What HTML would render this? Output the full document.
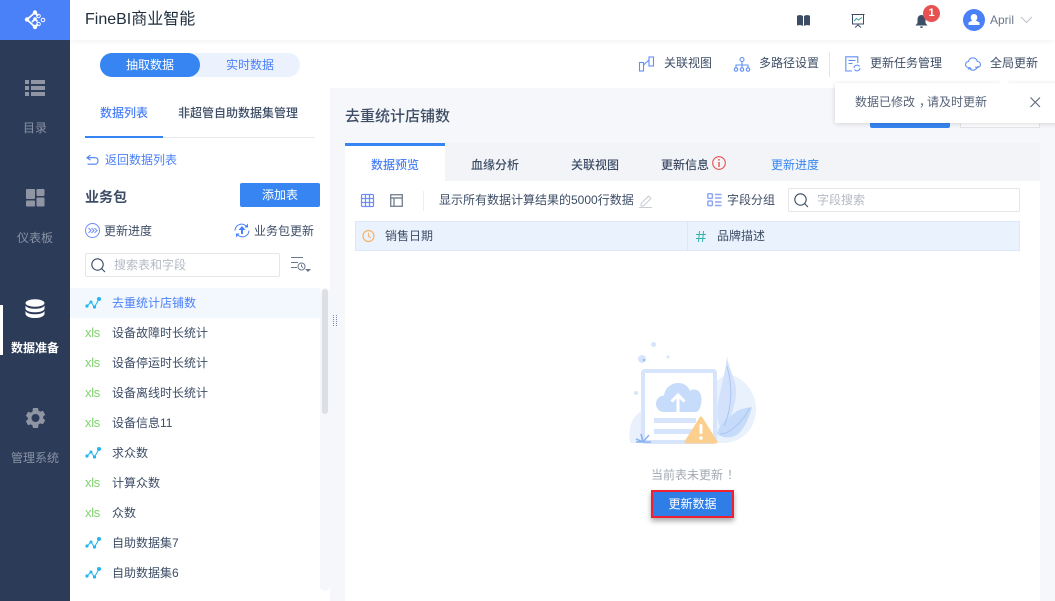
<!DOCTYPE html>
<html lang="zh"><head><meta charset="utf-8"><title>FineBI</title>
<style>
html,body{margin:0;padding:0;width:1055px;height:601px;overflow:hidden;background:#fff}
body{font-family:"Liberation Sans","Noto Sans CJK SC",sans-serif;font-size:12px;color:#3d4d66;position:relative}
.a,.t{position:absolute}
.t{white-space:nowrap;line-height:18px;height:18px}
svg{position:absolute;overflow:visible}
.c{text-align:center}
.m{font-weight:500}
.x{color:#7fd36f;letter-spacing:-.3px;font-size:13px;left:85px}
.ln path{fill:none;stroke:#23b5ee;stroke-width:1}.ln circle{fill:#23b5ee}
</style></head><body>
<!-- backgrounds -->
<div class="a" style="left:70px;top:0;width:985px;height:40px;background:#fff;box-shadow:0 1px 6px rgba(0,0,0,.06)"></div>
<div class="a" style="left:330px;top:88px;width:725px;height:513px;background:#f6f7fa"></div>
<div class="a" style="left:0;top:0;width:70px;height:601px;background:#2c3b58"></div>
<div class="a" style="left:0;top:0;width:70px;height:40px;background:#4a80f8"></div>

<!-- logo -->
<svg style="left:24px;top:10px" width="22" height="20" viewBox="0 0 22 20"><g fill="none" stroke="#fff" stroke-width="1"><circle cx="14.500" cy="6" r="1.800"/><circle cx="19" cy="10" r="1.800"/><circle cx="14.500" cy="14" r="1.800"/></g><path fill="none" stroke="#fff" stroke-width="1.800" d="M11 2.500L3 9.500l8 7.500M11 2.500l3 3.500M11 17l3-3M8 12l3-3 2.500 2.500"/><g fill="#fff"><circle cx="11" cy="2.500" r="2.200"/><circle cx="3" cy="9.500" r="2.200"/><circle cx="11" cy="17" r="2.200"/><circle cx="11" cy="9" r="1.800"/></g></svg>

<!-- sidebar -->
<svg style="left:25px;top:80px" width="20" height="16"><g fill="#8f95a3"><rect x="0" y="0" width="4" height="4"/><rect x="0" y="6" width="4" height="4"/><rect x="0" y="12" width="4" height="4"/><rect x="6" y="0" width="14" height="4"/><rect x="6" y="6" width="14" height="4"/><rect x="6" y="12" width="14" height="4"/></g></svg>
<div class="t c" style="left:0;top:119px;width:70px;color:#8a93a5">目录</div>
<svg style="left:26px;top:189px" width="19" height="19"><g fill="#8f95a3"><rect x="0" y="0" width="9" height="10" rx="1"/><rect x="10.500" y="0" width="8" height="7" rx="1"/><rect x="0" y="11.500" width="9" height="6" rx="1"/><rect x="10.500" y="8.500" width="8" height="9" rx="1"/></g></svg>
<div class="t c" style="left:0;top:229px;width:70px;color:#8a93a5">仪表板</div>
<div class="a" style="left:0;top:305px;width:3px;height:50px;background:#fff"></div>
<svg style="left:25px;top:299px" width="20" height="20"><g fill="#fff"><ellipse cx="10" cy="4" rx="9.500" ry="3.800"/><path d="M.5 6.500C2 9 6 9.800 10 9.800s8-.8 9.500-3.300V10c-1.500 2.500-5.500 3.300-9.500 3.300S2 12.500.5 10z"/><path d="M.5 12C2 14.500 6 15.300 10 15.300s8-.8 9.500-3.300v3.200C18 18.200 14 19 10 19S2 18.200.5 15.200z"/></g></svg>
<div class="t c" style="left:0;top:339px;width:70px;color:#fff;font-weight:700">数据准备</div>
<svg style="left:25px;top:407px" width="21" height="22" viewBox="0 0 21 22"><path fill="#8f95a3" fill-rule="evenodd" d="M8 1h5l.6 2.700 1.700.9 2.600-.9 2.300 4-2 1.800v2l2 1.800-2.300 4-2.600-.9-1.700.9L13 21H8l-.6-2.700-1.700-.9-2.600.9-2.300-4 2-1.800v-2l-2-1.800 2.300-4 2.600.9 1.700-.9zM10.500 7a4 4 0 1 0 0 8 4 4 0 0 0 0-8z"/></svg>
<div class="t c" style="left:0;top:449px;width:70px;color:#8a93a5">管理系统</div>

<!-- header -->
<div class="t" style="left:85px;top:10px;font-size:16px;line-height:20px;height:20px;color:#1f2d3d">FineBI商业智能</div>
<svg style="left:797px;top:15px" width="13" height="11"><path fill="#3d4d66" d="M0 .8C2-.2 4.500-.2 6 1v10C4.500 10 2 10 0 10.500zM13 .8C11-.2 8.500-.2 7 1v10c1.500-1 4-1 6-.5z"/></svg>
<svg style="left:851px;top:14px" width="14" height="14"><g fill="none" stroke="#3d4d66"><path d="M.5 .5h13M1.500 .5v9.500h11V.5M7 10v1M4 13.500l3-2.500 3 2.500"/><path stroke="#3d9a9a" d="M3 7l2.500-2.500 2 1.500L11 3.500"/></g></svg>
<svg style="left:915px;top:14px" width="13" height="15"><path fill="#3d4d66" d="M6.500 1C9 1 10.500 3 10.500 5.500V9l2 2.500H.5L2.500 9V5.500C2.500 3 4 1 6.500 1zM5 12.500h3C8 14.500 5 14.500 5 12.500z"/></svg>
<div class="a c" style="left:923px;top:5px;width:17px;height:17px;border-radius:50%;background:#e65251;color:#fff;font-size:11px;font-weight:700;line-height:16px">1</div>
<div class="a" style="left:963px;top:9px;width:22px;height:22px;border-radius:50%;background:#4a80f8"></div>
<svg style="left:963px;top:9px" width="22" height="22"><path fill="#fff" d="M11 5a3.300 3.300 0 0 1 3.300 3.500c0 1.400-.7 2.500-1.500 3l3.700 2v2.500h-11V13.500l3.700-2c-.8-.5-1.500-1.600-1.500-3A3.300 3.300 0 0 1 11 5z"/></svg>
<div class="t" style="left:990px;top:11px;color:#6b778c">April</div>
<svg style="left:1020px;top:16px" width="13" height="8"><path fill="none" stroke="#c0c5ce" stroke-width="1.100" d="M1 1l5.500 5.500L12 1"/></svg>

<!-- toggle -->
<div class="a" style="left:100px;top:53px;width:200px;height:24px;border-radius:12px;background:#ecf2fd"></div>
<div class="a" style="left:100px;top:53px;width:100px;height:24px;border-radius:12px;background:#3685f2"></div>
<div class="t c" style="left:100px;top:56px;width:100px;color:#fff">抽取数据</div>
<div class="t c" style="left:200px;top:56px;width:100px;color:#4a80f8">实时数据</div>

<!-- toolbar -->
<svg style="left:639px;top:56px" width="16" height="16"><g fill="none" stroke="#5f8ff5" stroke-width="1.100"><rect x=".5" y="6.500" width="4" height="8.500"/><rect x="10" y="1" width="4.500" height="9"/><path d="M4.500 9l5.500-5"/></g></svg>
<div class="t" style="left:664px;top:54px">关联视图</div>
<svg style="left:734px;top:57px" width="16" height="15"><g fill="none" stroke="#5f8ff5" stroke-width="1.100"><circle cx="8" cy="2.500" r="2"/><circle cx="2" cy="12.500" r="1.700"/><circle cx="8" cy="12.500" r="1.700"/><circle cx="14" cy="12.500" r="1.700"/><path d="M8 4.500v6M2 10.500V8h12v2.500"/></g></svg>
<div class="t" style="left:759px;top:54px">多路径设置</div>
<div class="a" style="left:829px;top:52px;width:1px;height:25px;background:#e3e6eb"></div>
<svg style="left:845px;top:56px" width="16" height="16"><g fill="none" stroke="#5f8ff5" stroke-width="1.100"><path d="M7 15H.8V.8h12V7"/><path d="M3.500 4.500h7M3.500 7.500h4"/><path d="M9 12a3 3 0 0 1 5.500-1.500M15 12a3 3 0 0 1-5.500 1.500"/></g></svg>
<div class="t" style="left:870px;top:54px">更新任务管理</div>
<svg style="left:965px;top:57px" width="16" height="14"><g fill="none" stroke="#5f8ff5" stroke-width="1.100"><path d="M3.500 10.500C1.500 10.500.5 9 .5 7.500c0-1.800 1.500-3 3-3C4 2 6 .8 8 .8c2.500 0 4 2 4.300 3.700 1.800 0 3.200 1.300 3.200 3s-1.300 3-3.500 3"/><path d="M12 10.500c-1 2-2.500 2.700-4 2.700s-2.800-.8-3.500-2.200M3 12.500l1.300-2 2 1.200M13.200 9l-1 1.700-2-1"/></g></svg>
<div class="t" style="left:990px;top:54px">全局更新</div>

<!-- left tabs -->
<div class="t m" style="left:100px;top:104px;color:#4a80f8">数据列表</div>
<div class="t m" style="left:178px;top:104px">非超管自助数据集管理</div>
<div class="a" style="left:85px;top:137px;width:230px;height:1px;background:#e8eaee"></div>
<div class="a" style="left:85px;top:136px;width:78px;height:2px;background:#3685f2"></div>

<svg style="left:86px;top:154px" width="13" height="12"><path fill="none" stroke="#4a80f8" stroke-width="1.100" d="M4.500 1L1 3.700l3.500 2.500M1 3.700h8c2 0 3 1.200 3 3s-1 3.500-3 3.500H1.500"/></svg>
<div class="t" style="left:105px;top:151px;color:#4a80f8">返回数据列表</div>
<div class="t" style="left:85px;top:188px;font-size:14px;font-weight:700">业务包</div>
<div class="a" style="left:240px;top:183px;width:80px;height:24px;border-radius:2px;background:#3685f2"></div>
<div class="t c" style="left:240px;top:186px;width:80px;color:#fff">添加表</div>
<svg style="left:85px;top:223px" width="15" height="15"><circle cx="7.500" cy="7.500" r="7" fill="none" stroke="#6f8ef5"/><path fill="none" stroke="#6f8ef5" d="M3.500 5l2.500 2.500L3.500 10M6.500 5L9 7.500 6.500 10M9.500 5L12 7.500 9.500 10"/></svg>
<div class="t" style="left:104px;top:222px">更新进度</div>
<svg style="left:234px;top:223px" width="16" height="15"><path fill="none" stroke="#4a80f8" d="M1 7.500a6.500 6.500 0 0 1 11-4.500M15 7.500a6.500 6.500 0 0 1-11 4.500"/><path fill="#4a80f8" d="M8 3l3.500 4H9v4H7V7H4.500zM14 .5V4.500h-3.500zM2 14.500v-4h3.500z"/></svg>
<div class="t" style="left:254px;top:222px">业务包更新</div>
<div class="a" style="left:85px;top:253px;width:193px;height:22px;border:1px solid #e3e6eb;border-radius:2px;background:#fff"></div>
<svg style="left:91px;top:258px" width="15" height="15"><circle cx="6.500" cy="6.500" r="5.700" fill="none" stroke="#3d4d66" stroke-width="1.100"/><path stroke="#3d4d66" stroke-width="1.100" d="M10.500 10.500l3.500 3.500"/></svg>
<div class="t" style="left:114px;top:256px;color:#b4bac4">搜索表和字段</div>
<svg style="left:291px;top:257px" width="20" height="18"><g fill="none" stroke="#6b778c"><path d="M0 .5h12M0 5.500h7M0 10.500h6"/><circle cx="10.500" cy="9.500" r="3.500"/><path d="M10.500 7.500v2l1.500 1"/></g><path fill="#6b778c" d="M14 12h6l-3 3z"/></svg>

<!-- list -->
<div class="a" style="left:70px;top:288px;width:250px;height:30px;background:#f3f7fe"></div>
<svg class="ln" style="left:85px;top:297px" width="16" height="12"><path d="M2 9l4-4 3.500 5L14 2"/><circle cx="2" cy="9" r="1.600"/><circle cx="6" cy="5" r="1.500"/><circle cx="9.500" cy="10" r="1.600"/><circle cx="14" cy="2" r="2"/></svg>
<div class="t" style="left:112px;top:294px;color:#4a80f8">去重统计店铺数</div>
<div class="t x" style="top:324px">xls</div>
<div class="t" style="left:112px;top:324px">设备故障时长统计</div>
<div class="t x" style="top:354px">xls</div>
<div class="t" style="left:112px;top:354px">设备停运时长统计</div>
<div class="t x" style="top:384px">xls</div>
<div class="t" style="left:112px;top:384px">设备离线时长统计</div>
<div class="t x" style="top:414px">xls</div>
<div class="t" style="left:112px;top:414px">设备信息11</div>
<svg class="ln" style="left:85px;top:447px" width="16" height="12"><path d="M2 9l4-4 3.500 5L14 2"/><circle cx="2" cy="9" r="1.600"/><circle cx="6" cy="5" r="1.500"/><circle cx="9.500" cy="10" r="1.600"/><circle cx="14" cy="2" r="2"/></svg>
<div class="t" style="left:112px;top:444px">求众数</div>
<div class="t x" style="top:474px">xls</div>
<div class="t" style="left:112px;top:474px">计算众数</div>
<div class="t x" style="top:504px">xls</div>
<div class="t" style="left:112px;top:504px">众数</div>
<svg class="ln" style="left:85px;top:537px" width="16" height="12"><path d="M2 9l4-4 3.500 5L14 2"/><circle cx="2" cy="9" r="1.600"/><circle cx="6" cy="5" r="1.500"/><circle cx="9.500" cy="10" r="1.600"/><circle cx="14" cy="2" r="2"/></svg>
<div class="t" style="left:112px;top:534px">自助数据集7</div>
<svg class="ln" style="left:85px;top:567px" width="16" height="12"><path d="M2 9l4-4 3.500 5L14 2"/><circle cx="2" cy="9" r="1.600"/><circle cx="6" cy="5" r="1.500"/><circle cx="9.500" cy="10" r="1.600"/><circle cx="14" cy="2" r="2"/></svg>
<div class="t" style="left:112px;top:564px">自助数据集6</div>
<div class="a" style="left:320px;top:288px;width:10px;height:303px;background:#f6f7fa;border-radius:5px"></div>
<div class="a" style="left:322px;top:289px;width:6px;height:125px;background:#dcdfe4;border-radius:3px"></div>
<svg style="left:333px;top:315px" width="5" height="12"><path stroke="#7a85a5" stroke-dasharray="1 1" d="M.5 0v12M3.500 0v12"/></svg>

<!-- main -->
<div class="t m" style="left:345px;top:107px;font-size:15px;line-height:20px;height:20px">去重统计店铺数</div>
<div class="a" style="left:870px;top:100px;width:80px;height:28px;border-radius:2px;background:#3685f2"></div>
<div class="a" style="left:960px;top:100px;width:78px;height:26px;border:1px solid #e3e6eb;background:#fff"></div>
<div class="a" style="left:345px;top:143px;width:695px;height:458px;background:#fff"></div>
<div class="a" style="left:445px;top:143px;width:595px;height:38px;background:#f3f4f8"></div>
<div class="a" style="left:345px;top:143px;width:100px;height:3px;background:#3685f2"></div>
<div class="t c m" style="left:345px;top:156px;width:100px;color:#4a80f8">数据预览</div>
<div class="t m" style="left:471px;top:156px">血缘分析</div>
<div class="t m" style="left:571px;top:156px">关联视图</div>
<div class="t m" style="left:661px;top:156px">更新信息</div>
<svg style="left:712px;top:156px" width="14" height="14"><circle cx="7" cy="7" r="6.300" fill="none" stroke="#e65251" stroke-width="1.100"/><path stroke="#e65251" stroke-width="1.400" d="M7 3v1.600M7 6v5"/></svg>
<div class="t" style="left:771px;top:156px;color:#3685f2">更新进度</div>

<svg style="left:361px;top:194px" width="13" height="13"><g fill="none" stroke="#6f8ef5" stroke-width="1.200"><rect x=".5" y=".5" width="12" height="12" rx="1"/><path d="M.5 4.500h12M.5 8.500h12M4.500.5v12M8.500.5v12"/></g></svg>
<svg style="left:390px;top:194px" width="13" height="13"><g fill="none" stroke="#7d8694" stroke-width="1.400"><rect x=".7" y=".7" width="11.600" height="11.600"/><path d="M.7 4h11.600M4 4v8.300"/></g></svg>
<div class="a" style="left:423px;top:191px;width:1px;height:20px;background:#eceef1"></div>
<div class="t" style="left:439px;top:191px">显示所有数据计算结果的5000行数据</div>
<svg style="left:639px;top:194px" width="14" height="14"><path fill="none" stroke="#c8ccd3" d="M2 9.500L9.500 2l2.500 2.500L4.500 12H2zM0 13.500h13"/></svg>
<svg style="left:707px;top:193px" width="15" height="14"><g fill="none" stroke="#8ea6f5" stroke-width="1.500"><rect x=".8" y=".8" width="4.600" height="4.600" rx="1"/><rect x=".8" y="8" width="4.600" height="4.600" rx="1"/><path d="M8 1.500h6.500M8 5h6.500M8 9h6.500M8 12.500h6.500"/></g></svg>
<div class="t" style="left:727px;top:191px">字段分组</div>
<div class="a" style="left:788px;top:188px;width:230px;height:22px;border:1px solid #e3e6eb;border-radius:2px;background:#fff"></div>
<svg style="left:794px;top:193px" width="15" height="15"><circle cx="6.500" cy="6.500" r="5.700" fill="none" stroke="#3d4d66" stroke-width="1.100"/><path stroke="#3d4d66" stroke-width="1.100" d="M10.500 10.500l3.500 3.500"/></svg>
<div class="t" style="left:817px;top:191px;color:#b4bac4">字段搜索</div>

<div class="a" style="left:355px;top:221px;width:663px;height:28px;border:1px solid #dce8fa;background:#eaf2fd"></div>
<div class="a" style="left:687px;top:222px;width:1px;height:28px;background:#dce8fa"></div>
<svg style="left:362px;top:230px" width="13" height="13"><circle cx="6.500" cy="6" r="5.500" fill="none" stroke="#f8b26a" stroke-width="1.200"/><path fill="none" stroke="#f8b26a" d="M6.500 2.700V6.500l2.300 1.300"/></svg>
<div class="t" style="left:385px;top:227px">销售日期</div>
<svg style="left:696px;top:231px" width="10" height="11"><path fill="none" stroke="#2fb4a8" d="M3.500 0L2.500 11M7.500 0L6.500 11M0 3.500h10M0 7.500h9.500"/></svg>
<div class="t" style="left:717px;top:227px">品牌描述</div>

<!-- empty illustration: 1 unit = 1px, origin (610,330) -->
<svg style="left:610px;top:330px" width="160" height="130" viewBox="0 0 160 130">
<path fill="#e9f1fd" d="M20 113c-2-14 1-28 14-33v33z"/>
<path fill="#e9f1fd" d="M100 113V60c6-10 14-16 20-15 14 2 26 18 26 34 0 20-14 34-34 34z"/>
<rect x="33" y="41" width="72" height="71" rx="2" fill="#fff" stroke="#d6e5fb" stroke-width="4"/>
<path fill="#c6dcfa" d="M54 82c-5 0-8-4-8-8 0-5 3-8 8-8.500C55 58 61 53 68 53c6 0 10 3 12 8 1-1 2-1.500 4-1.500 4 0 7 3 7 7v1c0 0 .5 0 .5 0 0 0 .500 14.500-6 14.500z"/>
<path fill="none" stroke="#fff" stroke-width="3" d="M68 82V65M61.500 71.500L68 65l6.500 6.500"/>
<rect x="44" y="88" width="42" height="5" fill="#d6e5fb"/><rect x="44" y="99" width="38" height="5" fill="#d6e5fb"/>
<path fill="#d3e2fa" d="M117 26c1 10 7 20 9 32 1 14-5 30-13 45-5-8-7-18-5-30 1-9 8-32 9-47z"/>
<path fill="#c6daf9" d="M107 104c2-8 7-14 15-19 5-4 6-6 20-8-3 12-8 22-14 27-6 4-14 5-21 0z"/>
<path fill="none" stroke="#a9c7f5" d="M110 104c10 0 22-12 30-26M117 36c5 18 6 40-3 60"/>
<path fill="#fbcf8d" stroke="#fbcf8d" stroke-width="3" stroke-linejoin="round" d="M91 88L106 112H76z"/>
<rect x="89.500" y="94" width="3" height="10" rx="1.500" fill="#fff"/><circle cx="91" cy="108" r="1.800" fill="#fff"/>
<path fill="none" stroke="#8bb3ef" stroke-width="1.600" d="M33 112l-2-8M33 112l6-7M33 112l-7-3M33 112h8M33 112l-7 0"/>
<circle cx="32" cy="29" r="4" fill="#d6e5fb"/><circle cx="34" cy="30" r="1.300" fill="#9bbcf2"/>
<circle cx="43.500" cy="14.500" r="2.500" fill="#d6e5fb"/><circle cx="58" cy="27" r="1.500" fill="#d6e5fb"/><circle cx="26" cy="63" r="2" fill="#d6e5fb"/>
</svg>
<div class="t" style="left:651px;top:466px;color:#a3a9b4">当前表未更新<span style="position:relative;left:4px">！</span></div>
<div class="a" style="left:651px;top:490px;width:83px;height:28px;box-sizing:border-box;border:2px solid #ef2030;background:#2f7ee8;box-shadow:0 3px 5px rgba(0,0,0,.35)"></div>
<div class="t c" style="left:651px;top:495px;width:83px;color:#fff">更新数据</div>

<!-- tooltip -->
<div class="a" style="left:835px;top:83px;width:225px;height:40px;background:#fff;box-shadow:0 1px 5px rgba(0,0,0,.14)"></div>
<div class="a" style="left:1000px;top:79px;width:8px;height:8px;background:#fff;transform:rotate(45deg)"></div>
<div class="t" style="left:855px;top:93px;color:#566278">数据已修改<span style="position:relative;left:4px">，</span>请及时更新</div>
<svg style="left:1030px;top:97px" width="10" height="10"><path stroke="#566278" d="M.5.500l9.500 9.500M10 .5L.5 10"/></svg>
</body></html>
